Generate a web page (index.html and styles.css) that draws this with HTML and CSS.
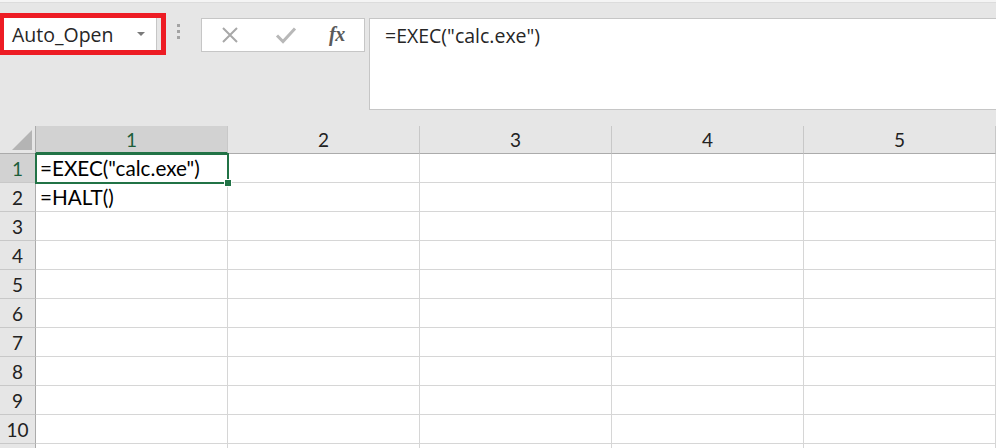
FILE: index.html
```html
<!DOCTYPE html>
<html>
<head>
<meta charset="utf-8">
<link rel="stylesheet" href="styles.css">
</head>
<body>
<div class="app">
  <div class="topstrip"></div>
  <div class="formula-area">
    <div class="redbox">
      <div class="namebox">
        <span class="name">Auto_Open</span>
        <svg class="dd" width="8" height="5" viewBox="0 0 8 5"><path d="M0 0H8L4 4Z" fill="#7a7a7a"/></svg>
      </div>
    </div>
    <div class="dots"><i></i><i></i><i></i></div>
    <div class="buttons">
      <svg class="ico" width="20" height="20" viewBox="0 0 20 20"><path d="M3 3L17 17M17 3L3 17" stroke="#a8a8a8" stroke-width="2" fill="none"/></svg>
      <svg class="ico" width="22" height="20" viewBox="0 0 22 20"><path d="M2 10.5L8 16.5L20 3.5" stroke="#b8b8b8" stroke-width="3" fill="none"/></svg>
      <span class="fx">fx</span>
    </div>
    <div class="formula">=EXEC("calc.exe")</div>
  </div>
  <div class="sheet">
    <div class="grid">
      <div class="corner"><svg width="22" height="22" viewBox="0 0 22 22"><path d="M21 1V21H1Z" fill="#b4b4b4"/></svg></div>
      <div class="ch sel">1</div>
      <div class="ch">2</div>
      <div class="ch">3</div>
      <div class="ch">4</div>
      <div class="ch">5</div>

      <div class="rh sel">1</div><div class="c">=EXEC("calc.exe")</div><div class="c"></div><div class="c"></div><div class="c"></div><div class="c"></div>
      <div class="rh">2</div><div class="c">=HALT()</div><div class="c"></div><div class="c"></div><div class="c"></div><div class="c"></div>
      <div class="rh">3</div><div class="c"></div><div class="c"></div><div class="c"></div><div class="c"></div><div class="c"></div>
      <div class="rh">4</div><div class="c"></div><div class="c"></div><div class="c"></div><div class="c"></div><div class="c"></div>
      <div class="rh">5</div><div class="c"></div><div class="c"></div><div class="c"></div><div class="c"></div><div class="c"></div>
      <div class="rh">6</div><div class="c"></div><div class="c"></div><div class="c"></div><div class="c"></div><div class="c"></div>
      <div class="rh">7</div><div class="c"></div><div class="c"></div><div class="c"></div><div class="c"></div><div class="c"></div>
      <div class="rh">8</div><div class="c"></div><div class="c"></div><div class="c"></div><div class="c"></div><div class="c"></div>
      <div class="rh">9</div><div class="c"></div><div class="c"></div><div class="c"></div><div class="c"></div><div class="c"></div>
      <div class="rh">10</div><div class="c"></div><div class="c"></div><div class="c"></div><div class="c"></div><div class="c"></div>
      <div class="rh"></div><div class="c"></div><div class="c"></div><div class="c"></div><div class="c"></div><div class="c"></div>
    </div>
    <div class="selection"><span class="handle"></span></div>
  </div>
</div>
</body>
</html>
```

FILE: styles.css
```css
html, body {
  margin: 0;
  padding: 0;
}
body {
  width: 996px;
  height: 448px;
  overflow: hidden;
  background: #e6e6e6;
  font-family: "Open Sans", "Noto Sans", sans-serif;
}
.app {
  width: 996px;
  height: 448px;
  overflow: hidden;
}
.topstrip {
  height: 2px;
  background: #f4f4f4;
  border-bottom: 1px solid #dcdcdc;
}
.formula-area {
  display: flex;
  align-items: flex-start;
  height: 107px;
  box-sizing: border-box;
  padding-top: 10px;
  margin-bottom: 16px;
}
.redbox {
  border: 5px solid #ed1c24;
  border-left-width: 4px;
  width: 157px;
  height: 32px;
  display: flex;
}
.namebox {
  width: 153px;
  height: 32px;
  background: #fff;
  border-right: 1px solid #c6c6c6;
  box-sizing: border-box;
  display: flex;
  align-items: center;
  justify-content: space-between;
  padding: 0 11px 0 8px;
}
.name {
  font-size: 19.5px;
  color: #262626;
  line-height: 1;
  margin-top: 1px;
}
.dd {
  margin-top: 1px;
}
.dots {
  display: flex;
  flex-direction: column;
  gap: 3px;
  margin: 11px 0 0 11px;
  width: 3px;
}
.dots i {
  display: block;
  width: 3px;
  height: 3px;
  background: #a3a3a3;
}
.buttons {
  margin: 5px 0 0 21px;
  width: 164px;
  height: 34px;
  box-sizing: border-box;
  background: #fff;
  border: 1px solid #c6c6c6;
  display: flex;
  align-items: center;
  padding-left: 18px;
}
.buttons .ico:nth-child(2) {
  margin-left: 35px;
}
.fx {
  margin-left: 32px;
  font-family: "Liberation Serif", "DejaVu Serif", serif;
  font-style: italic;
  font-weight: bold;
  font-size: 20px;
  color: #5a5a5a;
  letter-spacing: -0.5px;
  line-height: 1;
  margin-top: -2px;
}
.formula {
  margin: 5px 0 0 4px;
  flex: 1;
  height: 92px;
  box-sizing: border-box;
  background: #fff;
  border: 1px solid #c6c6c6;
  border-right: none;
  padding: 4px 0 0 15px;
  font-size: 19.5px;
  line-height: 26px;
  color: #262626;
}
.sheet {
  position: relative;
}
.grid {
  display: grid;
  grid-template-columns: 36px repeat(5, 192px) 1fr;
  grid-template-rows: 28px repeat(11, 29px);
  background: #fff;
}
.corner {
  background: #e6e6e6;
  border-right: 1px solid #ababab;
  border-bottom: 1px solid #ababab;
  box-sizing: border-box;
  display: flex;
  align-items: flex-end;
  justify-content: flex-end;
  padding: 0 2px 2px 0;
}
.ch {
  background: #e6e6e6;
  border-right: 1px solid #c8c8c8;
  border-bottom: 1px solid #ababab;
  box-sizing: border-box;
  display: flex;
  align-items: center;
  justify-content: center;
  font-family: "Lato", "Liberation Sans", sans-serif;
  font-size: 19px;
  color: #222;
}
.ch.sel {
  background: #d2d2d2;
  color: #1d5e3a;
  border-bottom: 2px solid #217346;
}
.rh {
  grid-column: 1;
  background: #e6e6e6;
  border-right: 1px solid #ababab;
  border-bottom: 1px solid #c8c8c8;
  box-sizing: border-box;
  display: flex;
  align-items: center;
  justify-content: center;
  font-family: "Lato", "Liberation Sans", sans-serif;
  font-size: 19px;
  color: #222;
}
.rh.sel {
  background: #d2d2d2;
  color: #1d5e3a;
}
.c {
  border-right: 1px solid #d6d6d6;
  border-bottom: 1px solid #d6d6d6;
  box-sizing: border-box;
  display: flex;
  align-items: center;
  padding-left: 4px;
  font-family: "Lato", "Liberation Sans", sans-serif;
  font-size: 20.7px;
  color: #000;
  white-space: nowrap;
}
.selection {
  position: absolute;
  left: 35px;
  top: 27px;
  width: 194px;
  height: 31px;
  box-sizing: border-box;
  border: 2px solid #217346;
}
.handle {
  position: absolute;
  right: -5px;
  bottom: -5px;
  width: 6px;
  height: 6px;
  background: #217346;
  border: 1px solid #fff;
}
```
